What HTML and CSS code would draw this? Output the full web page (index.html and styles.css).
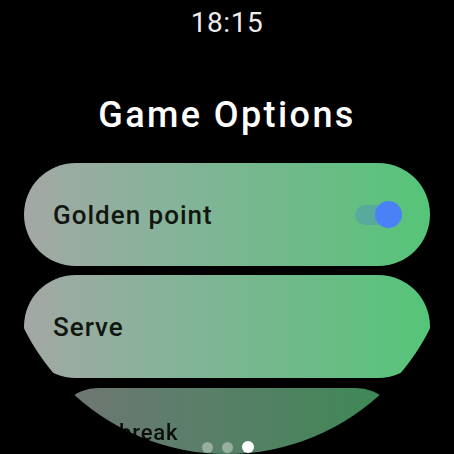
FILE: index.html
```html
<!DOCTYPE html>
<html>
<head>
<meta charset="utf-8">
<link rel="stylesheet" href="styles.css">
</head>
<body>
<div class="screen">
  <div class="time">18:15</div>
  <h1 class="title">Game Options</h1>
  <div class="list">
    <div class="chip">
      <span class="label">Golden point</span>
      <span class="toggle"><span class="track"></span><span class="thumb"></span></span>
    </div>
    <div class="chip">
      <span class="label">Serve</span>
    </div>
    <div class="chip chip-far">
      <span class="label">Tie break</span>
      <span class="toggle"><span class="track"></span><span class="thumb"></span></span>
    </div>
  </div>
  <div class="pager">
    <span class="dot"></span><span class="dot"></span><span class="dot active"></span>
  </div>
</div>
</body>
</html>
```
FILE: styles.css
```css
html, body {
  margin: 0;
  padding: 0;
  background: #000;
}
body {
  width: 454px;
  height: 454px;
  overflow: hidden;
  font-family: Roboto, "Liberation Sans", sans-serif;
}
.screen {
  position: relative;
  width: 454px;
  height: 454px;
  border-radius: 50%;
  overflow: hidden;
  background: #000;
  display: flex;
  flex-direction: column;
  align-items: center;
}
.time {
  margin-top: 7px;
  font-size: 28px;
  line-height: 32px;
  color: #ececec;
  letter-spacing: 0.6px;
}
.title {
  margin: 56px 0 0;
  font-size: 36px;
  line-height: 40px;
  font-weight: 500;
  letter-spacing: 2.4px;
  color: #fff;
}
.list {
  margin-top: 28px;
  width: 406px;
  display: flex;
  flex-direction: column;
  gap: 9px;
}
.chip {
  flex: none;
  height: 103px;
  border-radius: 52px;
  background: linear-gradient(90deg, #a3a8a4 0%, #86b39a 35%, #6dbb88 70%, #55c578 100%);
  display: flex;
  align-items: center;
  padding: 0 28px 0 29px;
  box-sizing: border-box;
}
.label {
  flex: 1;
  font-size: 26px;
  line-height: 30px;
  font-weight: 500;
  letter-spacing: 1px;
  color: #111611;
}
.toggle {
  position: relative;
  width: 47px;
  height: 27px;
  display: flex;
  align-items: center;
}
.track {
  width: 40px;
  height: 20px;
  border-radius: 10px;
  background: #58aa9c;
}
.thumb {
  position: absolute;
  right: 0;
  top: 0;
  width: 27px;
  height: 27px;
  border-radius: 50%;
  background: #4a81f6;
}
.chip-far {
  transform: scale(0.85);
  transform-origin: 50% 0;
  margin-top: 1px;
  filter: brightness(0.7);
}
.pager {
  position: absolute;
  left: 0;
  right: 0;
  bottom: 1px;
  display: flex;
  justify-content: center;
  align-items: center;
  gap: 9px;
  padding-left: 1px;
}
.dot {
  width: 11px;
  height: 11px;
  border-radius: 50%;
  background: rgba(225, 235, 228, 0.45);
}
.dot.active {
  width: 12px;
  height: 12px;
  background: #fff;
}
```
